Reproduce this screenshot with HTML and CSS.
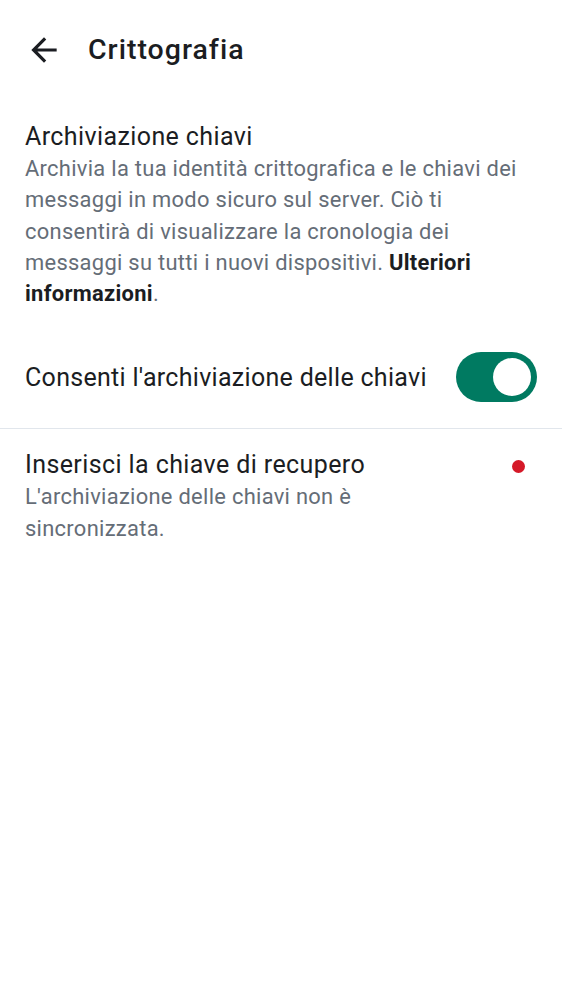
FILE: index.html
```html
<!DOCTYPE html>
<html lang="it">
<head>
<meta charset="utf-8">
<title>Crittografia</title>
<link rel="stylesheet" href="styles.css">
</head>
<body>
<header class="topbar">
  <button class="back" aria-label="Indietro">
    <svg width="38" height="38" viewBox="0 0 24 24"><path d="M20 11H7.83l5.59-5.59L12 4l-8 8 8 8 1.41-1.41L7.83 13H20v-2z" fill="#1b1d22"/></svg>
  </button>
  <h1 class="title">Crittografia</h1>
</header>
<main>
  <section class="item item-info">
    <div class="item-title info-title">Archiviazione chiavi</div>
    <div class="item-desc">Archivia la tua identità crittografica e le chiavi dei messaggi in modo sicuro sul server. Ciò ti consentirà di visualizzare la cronologia dei messaggi su tutti i nuovi dispositivi. <b class="link">Ulteriori informazioni</b>.</div>
  </section>
  <section class="item item-toggle">
    <div class="item-title toggle-label">Consenti l'archiviazione delle chiavi</div>
    <div class="switch"><span class="thumb"></span></div>
  </section>
  <hr class="divider">
  <section class="item item-recovery">
    <div class="text-col">
      <div class="item-title">Inserisci la chiave di recupero</div>
      <div class="item-desc">L'archiviazione delle chiavi non è sincronizzata.</div>
    </div>
    <span class="dot"></span>
  </section>
</main>
</body>
</html>
```
FILE: styles.css
```css
html, body {
  margin: 0;
  padding: 0;
  background: #ffffff;
  font-family: Roboto, "Liberation Sans", sans-serif;
  color: #1b1d22;
}
.topbar {
  height: 100px;
  display: flex;
  align-items: center;
  padding-left: 25px;
  box-sizing: border-box;
}
.back {
  border: 0;
  background: none;
  padding: 0;
  width: 38px;
  height: 38px;
  display: flex;
  align-items: center;
  justify-content: center;
  margin-right: 25px;
}
.title {
  margin: 0;
  font-size: 28.5px;
  font-weight: 500;
  line-height: 36px;
  letter-spacing: 1px;
}
.item {
  padding: 0 25px;
}
.item-title {
  font-size: 25px;
  line-height: 32px;
  letter-spacing: 0.4px;
}
.info-title {
  line-height: 33px;
}
.item-desc {
  font-size: 21.9px;
  line-height: 31.25px;
  color: #656d77;
  letter-spacing: 0.3px;
}
.link {
  color: #1b1d22;
  font-weight: 700;
}
.item-info {
  padding-top: 20px;
  padding-bottom: 20px;
}
.item-toggle {
  display: flex;
  align-items: center;
  justify-content: space-between;
  padding-top: 23px;
  padding-bottom: 26px;
}
.toggle-label {
  padding-top: 2px;
  letter-spacing: 0.3px;
}
.switch {
  width: 81px;
  height: 50px;
  border-radius: 25px;
  background: #007a61;
  display: flex;
  align-items: center;
  justify-content: flex-end;
  padding-right: 6px;
  box-sizing: border-box;
}
.thumb {
  width: 38px;
  height: 38px;
  border-radius: 50%;
  background: #ffffff;
}
.divider {
  margin: 0;
  border: 0;
  height: 1px;
  background: #e1e6ec;
}
.item-recovery {
  display: flex;
  justify-content: space-between;
  align-items: flex-start;
  padding-top: 20px;
}
.text-col {
  max-width: 400px;
}
.dot {
  width: 13px;
  height: 13px;
  border-radius: 50%;
  background: #d51928;
  margin-top: 10.5px;
  margin-right: 12px;
}
```
